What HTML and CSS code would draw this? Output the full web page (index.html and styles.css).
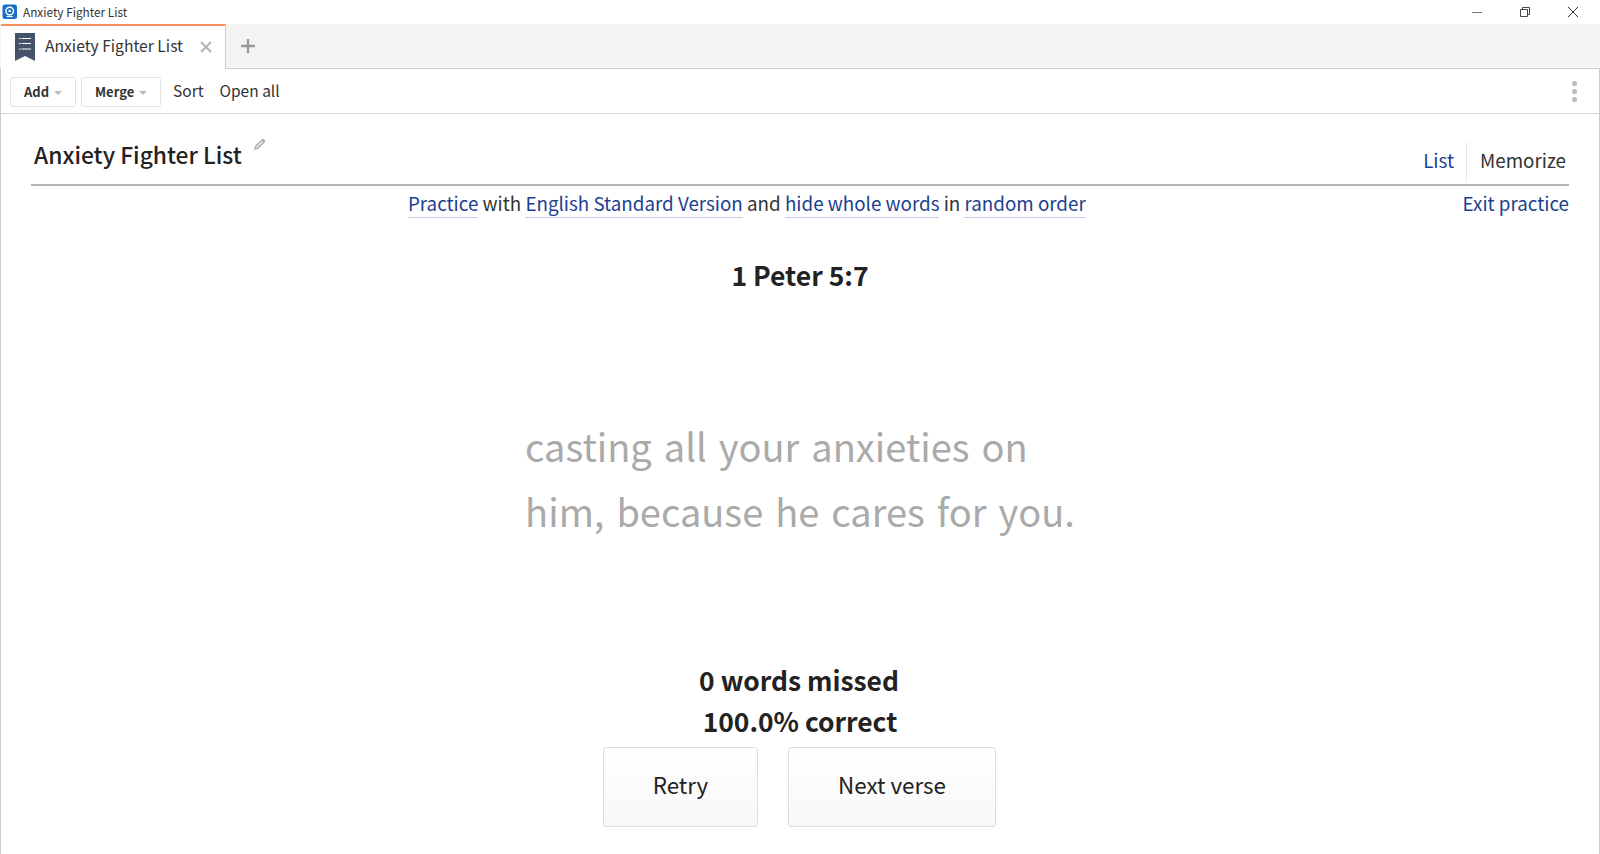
FILE: index.html
```html
<!DOCTYPE html>
<html lang="en">
<head>
<meta charset="utf-8">
<title>Anxiety Fighter List</title>
<link rel="stylesheet" href="styles.css">
</head>
<body>
<div class="app">
  <header class="titlebar">
    <svg class="app-icon" width="16" height="16" viewBox="0 0 16 16"><rect x="0.5" y="0.5" width="14.500" height="14.500" rx="2.5" fill="#1a6fc4"/><circle cx="7.700" cy="7" r="3.800" fill="none" stroke="#fff" stroke-width="1.400"/><circle cx="7.700" cy="7" r="1.300" fill="#fff"/><path d="M4.700 12.500h6" stroke="#fff" stroke-width="1.200"/></svg>
    <span class="app-name">Anxiety Fighter List</span>
    <div class="window-controls">
      <svg width="12" height="12" viewBox="0 0 12 12"><path d="M1 6.500h10" stroke="#777" fill="none"/></svg>
      <svg width="12" height="12" viewBox="0 0 12 12"><path d="M1.500 3.500h7v7h-7zM3.500 3.500v-2h7v7h-2" stroke="#444" fill="none"/></svg>
      <svg width="12" height="12" viewBox="0 0 12 12"><path d="M1 1l10 10M11 1L1 11" stroke="#333" fill="none"/></svg>
    </div>
  </header>
  <nav class="tabstrip">
    <div class="tab">
      <svg class="tab-icon" width="20" height="28" viewBox="0 0 20 28"><path d="M0 0h20v28l-10-5-10 5z" fill="#45536a"/><path d="M4 5.500h12M4 10.500h12M4 16h12" stroke="#fff" stroke-width="1" stroke-dasharray="1.500 1 9.500 0"/></svg>
      <span class="tab-label">Anxiety Fighter List</span>
      <svg class="tab-close" width="12" height="12" viewBox="0 0 12 12"><path d="M1 1l10 10M11 1L1 11" stroke="#b4b4b4" stroke-width="2" fill="none"/></svg>
    </div>
    <svg class="tab-add" width="16" height="16" viewBox="0 0 16 16"><path d="M8 1v14M1 8h14" stroke="#999" stroke-width="2.400" fill="none"/></svg>
  </nav>
  <div class="toolbar">
    <button class="tool-btn tool-add">Add<span class="caret"></span></button>
    <button class="tool-btn tool-merge">Merge<span class="caret"></span></button>
    <span class="tool-link tool-sort">Sort</span>
    <span class="tool-link">Open all</span>
    <span class="kebab"><i></i><i></i><i></i></span>
  </div>
  <main class="content">
    <div class="heading">
      <h1 class="list-title">Anxiety Fighter List</h1>
      <svg class="pencil" width="12" height="12" viewBox="0 0 12 12"><path d="M1 11l.8-3L8 1.800 10.200 4 4 10.200z" fill="#e4e4e4" stroke="#aaa" stroke-width="1.300"/><path d="M8.500 1.300l2.200 2.200" stroke="#aaa" stroke-width="2"/></svg>
      <div class="view-tabs">
        <a class="view-tab view-list">List</a>
        <span class="view-tab view-memorize">Memorize</span>
      </div>
    </div>
    <div class="options">
      <div class="sentence"><a class="opt">Practice</a> with <a class="opt">English Standard Version</a> and <a class="opt">hide whole words</a> in <a class="opt">random order</a></div>
      <a class="exit">Exit practice</a>
    </div>
    <h2 class="reference">1 Peter 5:7</h2>
    <p class="verse">casting all your anxieties on<br>him, because he cares for you.</p>
    <div class="results">
      <div class="result-line result-missed">0 words missed</div>
      <div class="result-line">100.0% correct</div>
    </div>
    <div class="actions">
      <button class="action action-retry">Retry</button>
      <button class="action action-next">Next verse</button>
    </div>
  </main>
</div>
</body>
</html>
```
FILE: styles.css
```css
* { box-sizing: border-box; }
html, body { margin: 0; height: 100%; overflow: hidden; }
body { background: #fff; color: #222; font-family: "Noto Sans CJK SC", "Noto Sans", sans-serif; }
.app { height: 854px; display: flex; flex-direction: column; }

.titlebar { height: 24px; display: flex; align-items: center; padding-left: 2px; background: #fff; }
.app-icon { flex: none; }
.app-name { margin-left: 5px; font-size: 11.800px; line-height: 20px; padding-bottom: 1px; color: #333; }
.window-controls { margin-left: auto; display: flex; gap: 36px; padding-right: 21px; }

.tabstrip { height: 45px; display: flex; align-items: center; background: #f4f4f4; border-bottom: 1px solid #ccc; }
.tab { width: 225px; height: 45px; display: flex; align-items: center; background: #fff; border-top: 2px solid #fb8f5e; border-right: 1px solid #ccc; padding-left: 14px; margin-left: 1px; }
.tab-icon { flex: none; margin-right: 10px; }
.tab-label { font-size: 15.650px; line-height: 24px; padding-bottom: 3px; color: #333; white-space: nowrap; }
.tab-close { margin-left: 17px; margin-bottom: 1px; flex: none; }
.tab-add { margin-left: 14px; }

.toolbar { height: 45px; display: flex; align-items: center; padding: 0 22px 0 9px; border-bottom: 1px solid #d9d9d9; border-left: 1px solid #ccc; border-right: 1px solid #ccc; }
.tool-btn { height: 30px; margin-top: 1px; padding: 0 0 0 13px; background: #fff; border: 1px solid #e2e2e2; border-radius: 3px; font: 700 13px "Noto Sans CJK SC", sans-serif; color: #333; display: flex; align-items: center; }
.tool-add { width: 66px; }
.tool-merge { width: 80px; margin-left: 5px; }
.caret { width: 0; height: 0; margin-left: 5px; margin-top: 2px; border: 4.500px solid transparent; border-top: 4.500px solid #bbb; border-bottom: 0; }
.tool-link { font-size: 15.500px; line-height: 24px; padding-bottom: 2px; color: #333; margin-left: 16px; }
.tool-sort { margin-left: 12px; }
.kebab { margin-left: auto; display: flex; flex-direction: column; gap: 3px; }
.kebab i { width: 5px; height: 5px; border-radius: 50%; background: #bbb; display: block; }

.content { flex: 1; display: flex; flex-direction: column; align-items: center; padding: 0 30px; border-left: 1px solid #ccc; border-right: 1px solid #ccc; min-height: 0; }
.heading { width: 100%; height: 72px; display: flex; border-bottom: 2px solid #b4b4b4; flex: none; }
.list-title { margin: 23px 0 0 3px; font-size: 22.800px; font-weight: 500; line-height: 36px; color: #222; }
.pencil { margin: 24px 0 0 12px; }
.view-tabs { margin-left: auto; margin-top: 28px; height: 40px; display: flex; align-items: flex-start; }
.view-tab { font-size: 18.800px; height: 40px; line-height: 35px; }
.view-list { color: #1c3f8f; border-right: 1px solid #e6e6e6; padding: 0 12px 0 0; }
.view-memorize { color: #333; padding: 0 3px 0 13px; }

.options { width: 100%; height: 32px; display: flex; font-size: 18.800px; line-height: 34px; flex: none; }
.sentence { flex: 1; text-align: center; color: #333; white-space: nowrap; }
.opt { color: #1c3f8f; border-bottom: 1px solid #c2cfe5; padding-bottom: 1px; }
.exit { color: #1c3f8f; }

.reference { margin: 37px 0 0; font-size: 26.500px; font-weight: 700; line-height: 40px; color: #222; }
.verse { margin: 118px 0 0; flex: none; font-size: 38px; line-height: 65px; color: #aaa; word-spacing: 3.500px; white-space: nowrap; }
.results { margin-top: 116px; text-align: center; font-size: 26.400px; font-weight: 700; line-height: 41px; color: #222; }
.result-missed { padding-right: 2px; }
.actions { display: flex; gap: 30px; margin: 6px 1px 0 0; }
.action { height: 80px; padding-bottom: 8px; background: linear-gradient(#fff, #f8f8f8); border: 1px solid #dedede; border-radius: 3px; font: 400 22.400px "Noto Sans CJK SC", sans-serif; color: #222; }
.action-retry { width: 155px; }
.action-next { width: 208px; }
```
